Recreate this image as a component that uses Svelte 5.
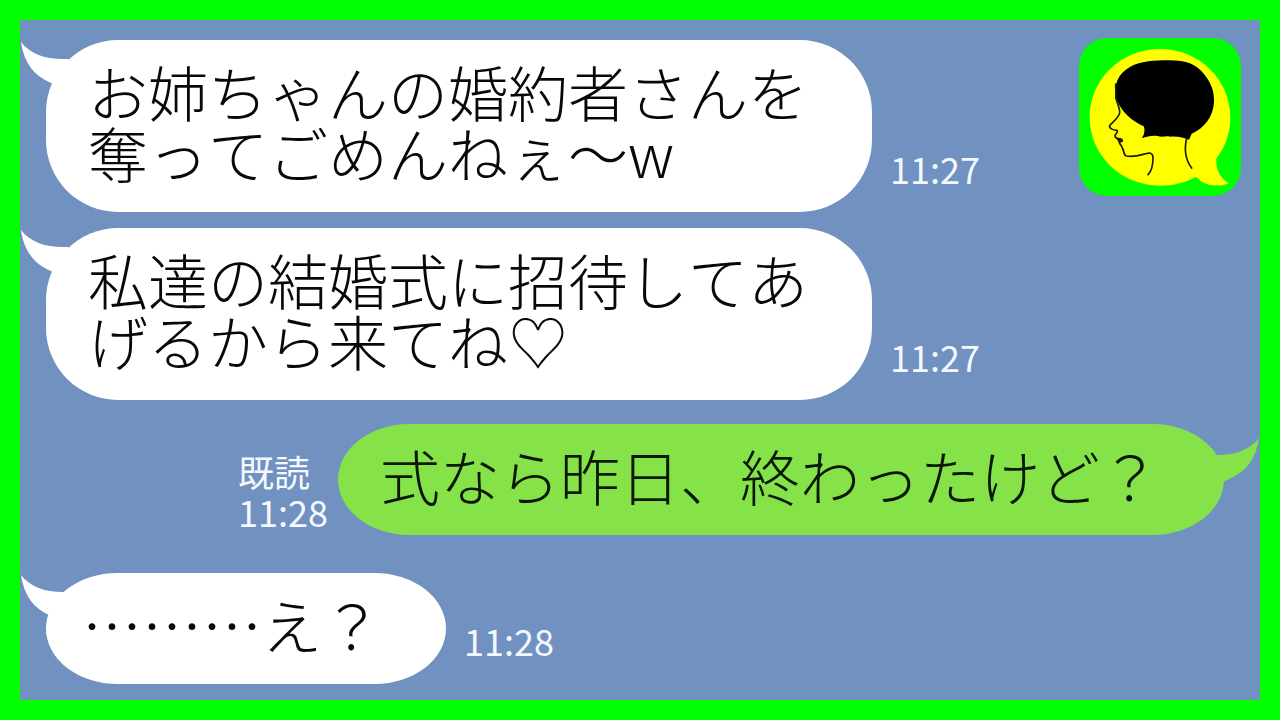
<script lang="ts">
  type Message = {
    from: 'them' | 'me';
    lines: string[];
    time: string;
    read?: boolean;
    space?: 'wide' | 'medium';
    dots?: boolean;
  };

  const messages: Message[] = [
    { from: 'them', lines: ['お姉ちゃんの婚約者さんを', '奪ってごめんねぇ～w'], time: '11:27' },
    { from: 'them', lines: ['私達の結婚式に招待してあ', 'げるから来てね♡'], time: '11:27' },
    { from: 'me', lines: ['式なら昨日、終わったけど？'], time: '11:28', read: true, space: 'medium' },
    { from: 'them', lines: ['………え？'], time: '11:28', space: 'wide', dots: true }
  ];
</script>

<main class="chat">
  <svg class="logo" viewBox="28 22 486 474" preserveAspectRatio="none" aria-hidden="true">
    <rect x="28" y="22" width="486" height="474" rx="84" fill="#00ff00" />
    <path
      d="M271 55C388 55 482 146 482 260C482 309 466 351 440 384C438 418 452 442 478 458C442 472 402 464 379 438C347 456 311 465 271 465C154 465 60 374 60 260C60 146 154 55 271 55Z"
      fill="#ffff00"
    />
    <path
      d="M137 205C134 155 146 132 176 112C208 91 252 89 300 89C350 89 378 100 403 130C426 158 434 185 433 214C431 258 404 292 366 309L358 327C343 321 324 316 301 318C289 315 277 321 264 316C249 314 234 316 216 323C224 312 227 299 222 287C188 271 159 248 143 212Z"
      fill="#000"
    />
    <g fill="none" stroke="#1c1c00" stroke-width="5" stroke-linecap="round" stroke-linejoin="round">
      <path d="M138 160L139 203C143 220 151 233 150 246C147 263 127 275 120 285C118 293 129 298 142 299C146 305 138 310 136 315C136 321 141 323 147 324C156 324 160 329 157 332L149 335C150 342 156 343 156 348C165 360 160 373 170 376C195 381 221 370 237 367C246 367 250 372 250 381C250 403 247 420 235 432" />
      <path d="M351 322C344 353 346 386 366 412" />
    </g>
    <path d="M138 321L158 327L156 334L148 336Z" fill="#1c1c00" />
  </svg>

  {#each messages as message}
    <article class="message {message.from} {message.space ?? ''}">
      <div class="bubble" class:single={message.lines.length === 1} class:dots={message.dots}>
        <svg class="tail" width="60" height="52" viewBox="0 0 60 52" aria-hidden="true">
          <path d="M1 2C10 14 26 20 48 19L60 32L48 52L31 43C14 36 4 23 1 2Z" />
        </svg>
        {#each message.lines as line}
          <p>{line}</p>
        {/each}
      </div>
      <div class="meta">
        {#if message.read}
          <span>既読</span>
        {/if}
        <time>{message.time}</time>
      </div>
    </article>
  {/each}
</main>

<style>
  :global(body) {
    margin: 0;
  }

  .chat {
    position: relative;
    box-sizing: border-box;
    min-height: 100vh;
    padding: 20px 36px 16px 26px;
    border: 20px solid #00ff00;
    background: #7191c0;
    font-family: 'Noto Sans CJK JP', sans-serif;
    font-kerning: none;
    display: flex;
    flex-direction: column;
    gap: 16px;
  }

  .logo {
    position: absolute;
    top: 18px;
    right: 19px;
    width: 162px;
    height: 158px;
  }

  .message {
    display: flex;
    align-items: flex-end;
    gap: 18px;
  }

  .message.me {
    flex-direction: row-reverse;
    gap: 10px;
  }

  .medium {
    margin-top: 8px;
  }

  .wide {
    margin-top: 22px;
  }

  .bubble {
    position: relative;
    padding: 20px 64px 30px 42px;
    border-radius: 72px;
    background: #fff;
    color: #080808;
    font-size: 60px;
    font-weight: 300;
    line-height: 61px;
    white-space: nowrap;
  }

  .bubble.single {
    border-radius: 72px / 56px;
  }

  .bubble.dots {
    padding-left: 36px;
  }

  .me .bubble {
    background: #85e249;
    color: #081803;
  }

  .bubble p {
    margin: 0;
  }

  .tail {
    position: absolute;
    top: 0;
    left: -26px;
    fill: #fff;
  }

  .me .tail {
    top: 12px;
    left: auto;
    right: -36px;
    fill: #85e249;
    transform: scaleX(-1);
  }

  .meta {
    display: flex;
    flex-direction: column;
    margin-bottom: 24px;
    color: #f4f8ff;
    font-size: 36px;
    line-height: 40px;
  }

  .me .meta {
    margin-bottom: 4px;
  }
</style>
